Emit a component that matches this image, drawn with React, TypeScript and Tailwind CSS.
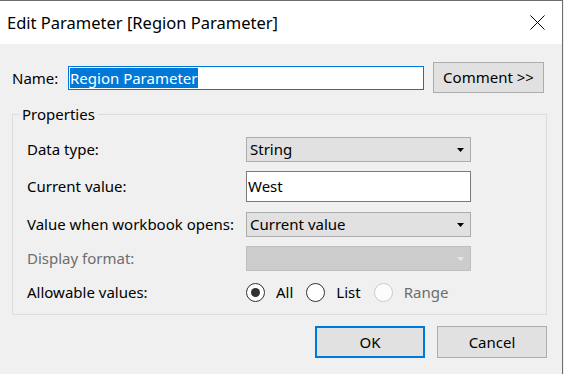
import React from "react";

function Arrow({ color }: { color: string }) {
  return (
    <svg width="7" height="4" viewBox="0 0 7 4">
      <polygon points="0,0 7,0 3.5,4" fill={color} />
    </svg>
  );
}

function Radio({ checked, disabled, label }: { checked?: boolean; disabled?: boolean; label: string }) {
  return (
    <div className="flex items-center">
      <div
        className={
          disabled
            ? "w-[19px] h-[19px] rounded-full border border-[#cccccc] bg-[#fcfcfc] flex items-center justify-center"
            : "w-[19px] h-[19px] rounded-full border border-[#333333] bg-white flex items-center justify-center"
        }
      >
        {checked && <div className="w-[9px] h-[9px] rounded-full bg-[#333333]" />}
      </div>
      <span className={disabled ? "ml-[11px] text-[#6d6d6d]" : "ml-[11px]"}>{label}</span>
    </div>
  );
}

export default function App() {
  return (
    <div className="w-[564px] h-[374px] bg-[#f0f0f0] overflow-hidden font-['Noto_Sans',sans-serif] text-[15px] text-black">
      <div className="w-[563px] h-[374px] border-t border-r border-[#6e6e6e] bg-[#f0f0f0]">
        <div className="h-[43px] bg-white flex items-center justify-between pl-[7px] pr-[17px]">
          <span className="text-[16.5px] pt-[2px]">Edit Parameter [Region Parameter]</span>
          <svg width="15" height="15" viewBox="0 0 15 15">
            <path d="M0.5 0.5 L14.5 14.5 M14.5 0.5 L0.5 14.5" stroke="#000" strokeWidth="1" />
          </svg>
        </div>
        <div className="pl-[12px] pt-[18px]">
          <div className="flex items-center h-[31px]">
            <span className="w-[56px] leading-[20px]">Name:</span>
            <div className="w-[356px] h-[24px] border border-[#0078d7] bg-white flex items-center pl-[1px]">
              <span className="bg-[#0078d7] text-white leading-[20px]">Region Parameter</span>
            </div>
            <div className="ml-[9px] w-[111px] h-[31px] border border-[#adadad] bg-[#e1e1e1] flex items-center justify-center">
              Comment &gt;&gt;
            </div>
          </div>
          <div className="relative mt-[21px] w-[535px] border border-[#dcdcdc] pt-[22px] pb-[9px] pl-[14px]">
            <span className="absolute left-[6px] top-[-11px] px-[3px] bg-[#f0f0f0] leading-[20px]">Properties</span>
            <div className="flex items-center h-[25px]">
              <span className="w-[219px]">Data type:</span>
              <div className="w-[225px] h-[25px] border border-[#adadad] bg-[#e1e1e1] flex items-center justify-between pl-[3px] pr-[6px]">
                <span>String</span>
                <Arrow color="#000" />
              </div>
            </div>
            <div className="flex items-center h-[31px] mt-[9px]">
              <span className="w-[219px]">Current value:</span>
              <div className="w-[225px] h-[31px] border border-[#7a7a7a] bg-white flex items-center pl-[1px]">
                <span>West</span>
              </div>
            </div>
            <div className="flex items-center h-[25px] mt-[10px]">
              <span className="w-[219px]">Value when workbook opens:</span>
              <div className="w-[225px] h-[25px] border border-[#adadad] bg-[#e1e1e1] flex items-center justify-between pl-[3px] pr-[6px]">
                <span>Current value</span>
                <Arrow color="#000" />
              </div>
            </div>
            <div className="flex items-center h-[25px] mt-[9px]">
              <span className="w-[219px] text-[#6d6d6d]">Display format:</span>
              <div className="w-[225px] h-[25px] border border-[#bfbfbf] bg-[#cccccc] flex items-center justify-end pr-[6px]">
                <Arrow color="#e8e8e8" />
              </div>
            </div>
            <div className="flex items-center h-[25px] mt-[9px]">
              <span className="w-[219px]">Allowable values:</span>
              <div className="flex items-center gap-[13px]">
                <Radio checked label="All" />
                <Radio label="List" />
                <Radio disabled label="Range" />
              </div>
            </div>
          </div>
          <div className="w-[535px] flex justify-end gap-[12px] mt-[11px]">
            <div className="w-[110px] h-[32px] border-2 border-[#0078d7] bg-[#e1e1e1] flex items-center justify-center">OK</div>
            <div className="w-[110px] h-[32px] border border-[#adadad] bg-[#e1e1e1] flex items-center justify-center">Cancel</div>
          </div>
        </div>
      </div>
    </div>
  );
}
